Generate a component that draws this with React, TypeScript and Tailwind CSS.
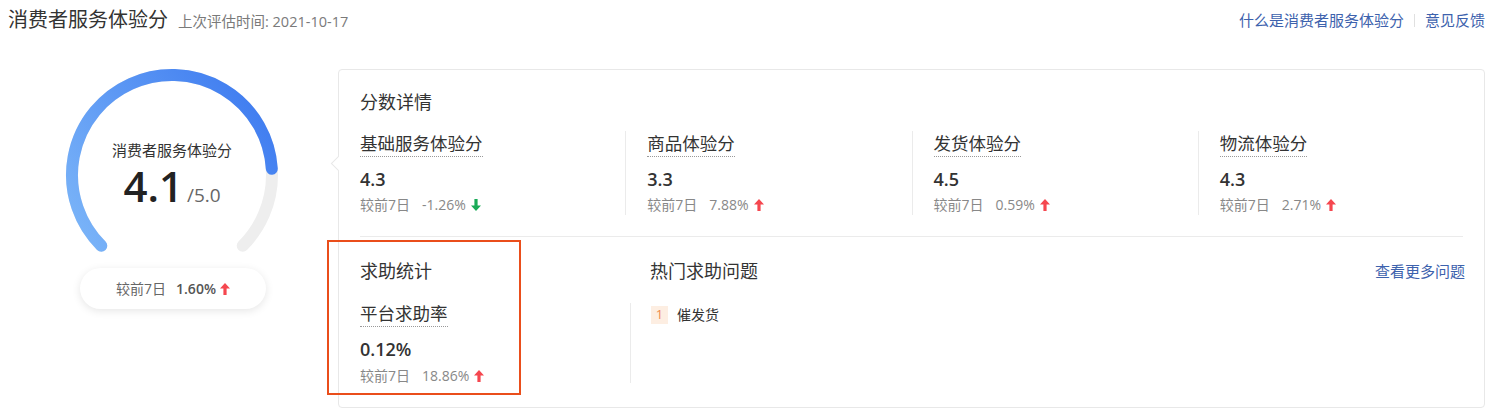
import React from "react";

const font = { fontFamily: '"Open Sans", "Noto Sans CJK SC", sans-serif' };

function Up() {
  return (
    <svg width="10" height="12" viewBox="0 0 10 12" className="inline-block">
      <path d="M5 0 L10 5.5 H6.6 V12 H3.4 V5.5 H0 Z" fill="#f5474f" />
    </svg>
  );
}
function Down() {
  return (
    <svg width="10" height="12" viewBox="0 0 10 12" className="inline-block">
      <path d="M5 12 L10 6.5 H6.6 V0 H3.4 V6.5 H0 Z" fill="#1aab57" />
    </svg>
  );
}

function Gauge() {
  const cx = 120, cy = 120, r = 100;
  const pt = (deg: number) => {
    const a = (deg * Math.PI) / 180;
    return [cx + r * Math.sin(a), cy - r * Math.cos(a)];
  };
  const [sx, sy] = pt(225);
  const [ex, ey] = pt(135);
  const [bx, by] = pt(225 + 270 * 0.82);
  return (
    <div className="relative w-[240px] h-[205px]">
      <svg width="240" height="205" viewBox="0 0 240 205">
        <defs>
          <linearGradient id="g" gradientUnits="userSpaceOnUse" x1="30" y1="190" x2="220" y2="60">
            <stop offset="0" stopColor="#7ab4f8" />
            <stop offset="1" stopColor="#3f7cf0" />
          </linearGradient>
        </defs>
        <path d={`M${sx} ${sy} A${r} ${r} 0 1 1 ${ex} ${ey}`} fill="none" stroke="#eeeeee" strokeWidth="12" strokeLinecap="round" />
        <path d={`M${sx} ${sy} A${r} ${r} 0 1 1 ${bx} ${by}`} fill="none" stroke="url(#g)" strokeWidth="12" strokeLinecap="round" />
      </svg>
      <div className="absolute left-0 right-0 top-[85px] flex flex-col items-center">
        <div className="text-[15px] leading-[20px] text-[#333]">消费者服务体验分</div>
        <div className="flex items-baseline mt-[6px]">
          <span className="text-[42px] leading-[40px] font-semibold text-[#222]">4.1</span>
          <span className="text-[19px] leading-[24px] text-[#666] ml-[4px]">/5.0</span>
        </div>
      </div>
    </div>
  );
}

function Change({ change, up }: { change: string; up: boolean }) {
  return (
    <div className="flex items-center text-[14px] leading-[20px] text-[#888]">
      <span>较前7日</span>
      <span className="ml-[12px] mr-[5px]">{change}</span>
      {up ? <Up /> : <Down />}
    </div>
  );
}

function Metric({ label, value, change, up, first }: { label: string; value: string; change: string; up: boolean; first?: boolean }) {
  return (
    <div className={`pl-[21px] ${first ? "" : "border-l border-[#ebebeb]"}`}>
      <div className="flex">
        <span className="text-[17.5px] leading-[24px] text-[#333] border-b border-dotted border-[#999] pb-[1px]">{label}</span>
      </div>
      <div className="text-[18px] leading-[22px] font-semibold text-[#333] mt-[11px]">{value}</div>
      <div className="mt-[5px]">
        <Change change={change} up={up} />
      </div>
    </div>
  );
}

export default function App() {
  return (
    <div className="relative w-[1498px] h-[409px] bg-white overflow-hidden" style={font}>
      <div className="flex items-center justify-between h-[40px] pl-[8px] pr-[13px]">
        <div className="flex items-baseline">
          <span className="text-[20px] text-[#333]">消费者服务体验分</span>
          <span className="text-[14.5px] text-[#7a7a7a] ml-[10px]">上次评估时间: 2021-10-17</span>
        </div>
        <div className="flex items-center text-[15px] text-[#3d62ad]">
          <span>什么是消费者服务体验分</span>
          <span className="w-px h-[13px] bg-[#e0e0e0] mx-[10px]" />
          <span>意见反馈</span>
        </div>
      </div>
      <div className="flex items-start">
        <div className="w-[330px] flex flex-col items-start">
          <div className="ml-[52px] mt-[15px]">
            <Gauge />
          </div>
          <div className="ml-[80px] mt-[8px] w-[186px] h-[41px] rounded-full bg-white shadow-[0_2px_8px_rgba(0,0,0,0.1)] flex items-center justify-center">
            <span className="text-[14px] text-[#666]">较前7日</span>
            <span className="text-[14px] font-semibold text-[#555] ml-[10px] mr-[4px]">1.60%</span>
            <Up />
          </div>
        </div>
        <div className="relative ml-[8px] mt-[29px] w-[1147px] h-[339px] border border-[#e8e8e8] rounded-[4px]">
          <div className="absolute left-[-6px] top-[88px] w-[11px] h-[11px] bg-white border-l border-b border-[#e8e8e8] rotate-45" />
          <div className="pt-[19px]">
            <div className="pl-[21px] text-[18px] leading-[26px] text-[#333]">分数详情</div>
            <div className="grid grid-cols-4 mt-[16px]">
              <Metric first label="基础服务体验分" value="4.3" change="-1.26%" up={false} />
              <Metric label="商品体验分" value="3.3" change="7.88%" up />
              <Metric label="发货体验分" value="4.5" change="0.59%" up />
              <Metric label="物流体验分" value="4.3" change="2.71%" up />
            </div>
            <div className="mx-[21px] mt-[21px] h-px bg-[#ebebeb]" />
            <div className="flex mt-[21px]">
              <div className="w-[291px] pl-[21px]">
                <div className="text-[18px] leading-[26px] text-[#333]">求助统计</div>
                <div className="flex mt-[17px]">
                  <span className="text-[17.5px] leading-[24px] text-[#333] border-b border-dotted border-[#999] pb-[1px]">平台求助率</span>
                </div>
                <div className="text-[18px] leading-[22px] font-semibold text-[#333] mt-[11px]">0.12%</div>
                <div className="mt-[6px]">
                  <Change change="18.86%" up />
                </div>
              </div>
              <div className="flex-1 pr-[19px]">
                <div className="flex items-center justify-between pl-[20px] h-[26px]">
                  <span className="text-[18px] leading-[26px] text-[#333]">热门求助问题</span>
                  <span className="text-[15px] text-[#3d62ad]">查看更多问题</span>
                </div>
                <div className="border-l border-[#ebebeb] mt-[19px] h-[80px] pl-[20px] pt-[1px]">
                  <div className="flex items-center">
                    <span className="w-[17px] h-[18px] bg-[#fdeee2] text-[#f08a4b] text-[13px] flex items-center justify-center">1</span>
                    <span className="ml-[9px] text-[14px] text-[#333]">催发货</span>
                  </div>
                </div>
              </div>
            </div>
          </div>
        </div>
      </div>
      <div className="absolute left-[327px] top-[240px] w-[194px] h-[155px] border-2 border-[#ea4e1b]" />
    </div>
  );
}
